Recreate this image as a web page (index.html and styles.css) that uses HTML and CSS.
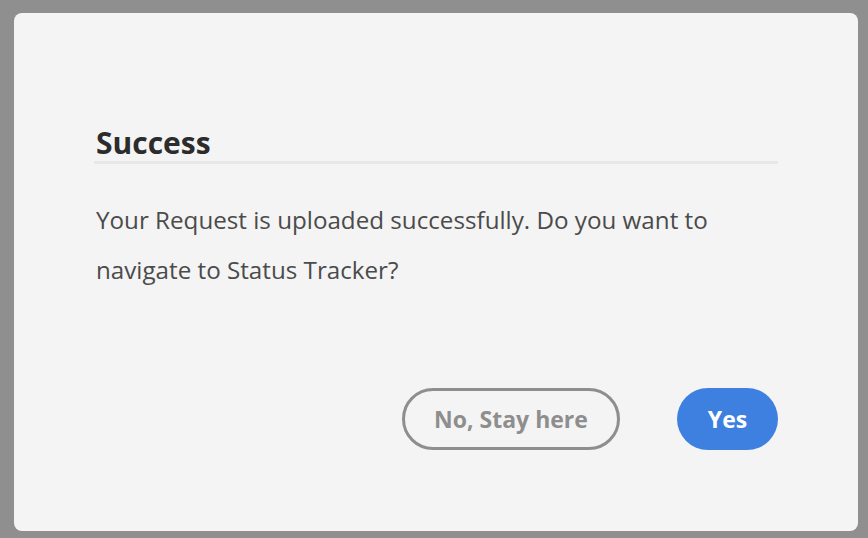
FILE: index.html
```html
<!DOCTYPE html>
<html>
<head>
<meta charset="utf-8">
<link rel="stylesheet" href="styles.css">
</head>
<body>
<div class="dialog">
  <h2 class="title">Success</h2>
  <div class="divider"></div>
  <p class="message">Your Request is uploaded successfully. Do you want to navigate to Status Tracker?</p>
  <div class="actions">
    <button class="btn btn-secondary">No, Stay here</button>
    <button class="btn btn-primary">Yes</button>
  </div>
</div>
</body>
</html>
```
FILE: styles.css
```css
html, body {
  margin: 0;
  padding: 0;
  background: #8f8f8f;
  width: 868px;
  height: 538px;
  overflow: hidden;
}
body {
  padding: 13px 0 0 14px;
  box-sizing: border-box;
  font-family: "Open Sans", "Noto Sans", sans-serif;
}
.dialog {
  width: 844px;
  height: 518px;
  background: #f4f4f4;
  border-radius: 8px;
  box-sizing: border-box;
  padding: 113px 80px 0 82px;
  display: flex;
  flex-direction: column;
}
.title {
  margin: 0;
  font-size: 30px;
  font-weight: 700;
  color: #2c2c2c;
  line-height: 33px;
}
.divider {
  height: 3px;
  background: #e8e8e8;
  margin: 2px 0 0 -2px;
}
.message {
  margin: 31px 0 0 0;
  font-size: 24.2px;
  line-height: 50px;
  color: #4b4b4b;
  width: 660px;
}
.actions {
  display: flex;
  justify-content: flex-end;
  gap: 57px;
  margin-top: 93px;
}
.btn {
  height: 62px;
  border-radius: 31px;
  font-family: inherit;
  font-size: 23px;
  font-weight: 700;
  box-sizing: border-box;
  cursor: pointer;
}
.btn-secondary {
  width: 218px;
  background: transparent;
  border: 3px solid #8e8e8e;
  color: #8e8e8e;
}
.btn-primary {
  width: 101px;
  background: #3d80e0;
  border: none;
  color: #ffffff;
}
```
